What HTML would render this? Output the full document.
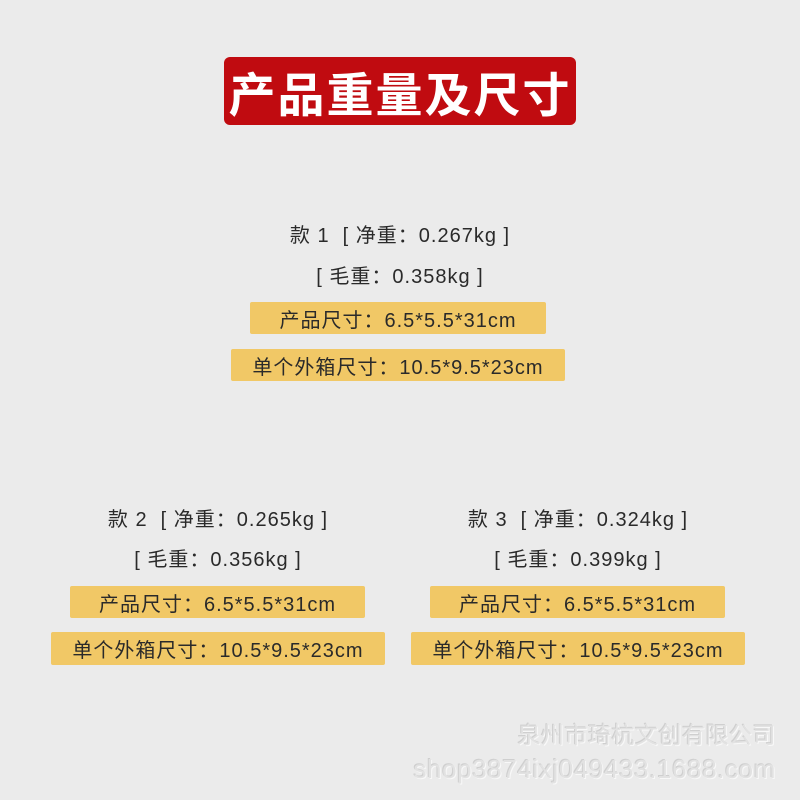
<!DOCTYPE html>
<html><head><meta charset="utf-8"><style>
body{margin:0;width:800px;height:800px;background:#ebebeb;position:relative;overflow:hidden;font-family:"Liberation Sans","Noto Sans CJK SC",sans-serif;color:#2a2a2a}
.a{position:absolute;display:flex;align-items:center;justify-content:center;white-space:nowrap}
.t{font-size:20px;letter-spacing:1px}
.y{background:#f1c866;border-radius:2px;font-size:20px;letter-spacing:1px}
.title{left:224px;top:57px;width:352px;height:68px;background:#c00b10;border-radius:6px;color:#fff;font-size:47px;font-weight:bold;letter-spacing:2px;font-family:"Noto Sans CJK SC",sans-serif}
.w{color:#e2e2e2;text-shadow:-1px -1px 0 #cfcfcf,1px 1px 0 #f8f8f8;font-size:23px}
</style></head><body>
<div class="a title">产品重量及尺寸</div>

<div class="a t" style="left:200px;width:400px;top:219px;height:28px">款 1 &nbsp;[ 净重：0.267kg ]</div>
<div class="a t" style="left:200px;width:400px;top:260px;height:28px">[ 毛重：0.358kg ]</div>
<div class="a y" style="left:250px;width:296px;top:302px;height:32px">产品尺寸：6.5*5.5*31cm</div>
<div class="a y" style="left:231px;width:334px;top:349px;height:32px">单个外箱尺寸：10.5*9.5*23cm</div>

<div class="a t" style="left:18px;width:400px;top:503px;height:28px">款 2 &nbsp;[ 净重：0.265kg ]</div>
<div class="a t" style="left:18px;width:400px;top:543px;height:28px">[ 毛重：0.356kg ]</div>
<div class="a y" style="left:70px;width:295px;top:586px;height:32px">产品尺寸：6.5*5.5*31cm</div>
<div class="a y" style="left:51px;width:334px;top:632px;height:33px">单个外箱尺寸：10.5*9.5*23cm</div>

<div class="a t" style="left:378px;width:400px;top:503px;height:28px">款 3 &nbsp;[ 净重：0.324kg ]</div>
<div class="a t" style="left:378px;width:400px;top:543px;height:28px">[ 毛重：0.399kg ]</div>
<div class="a y" style="left:430px;width:295px;top:586px;height:32px">产品尺寸：6.5*5.5*31cm</div>
<div class="a y" style="left:411px;width:334px;top:632px;height:33px">单个外箱尺寸：10.5*9.5*23cm</div>

<div class="a w" style="right:24px;top:719px;height:28px;justify-content:flex-end;letter-spacing:0.5px">泉州市琦杭文创有限公司</div>
<div class="a w" style="right:24px;top:754px;height:30px;justify-content:flex-end;font-size:26px;letter-spacing:0.6px">shop3874ixj049433.1688.com</div>
</body></html>
